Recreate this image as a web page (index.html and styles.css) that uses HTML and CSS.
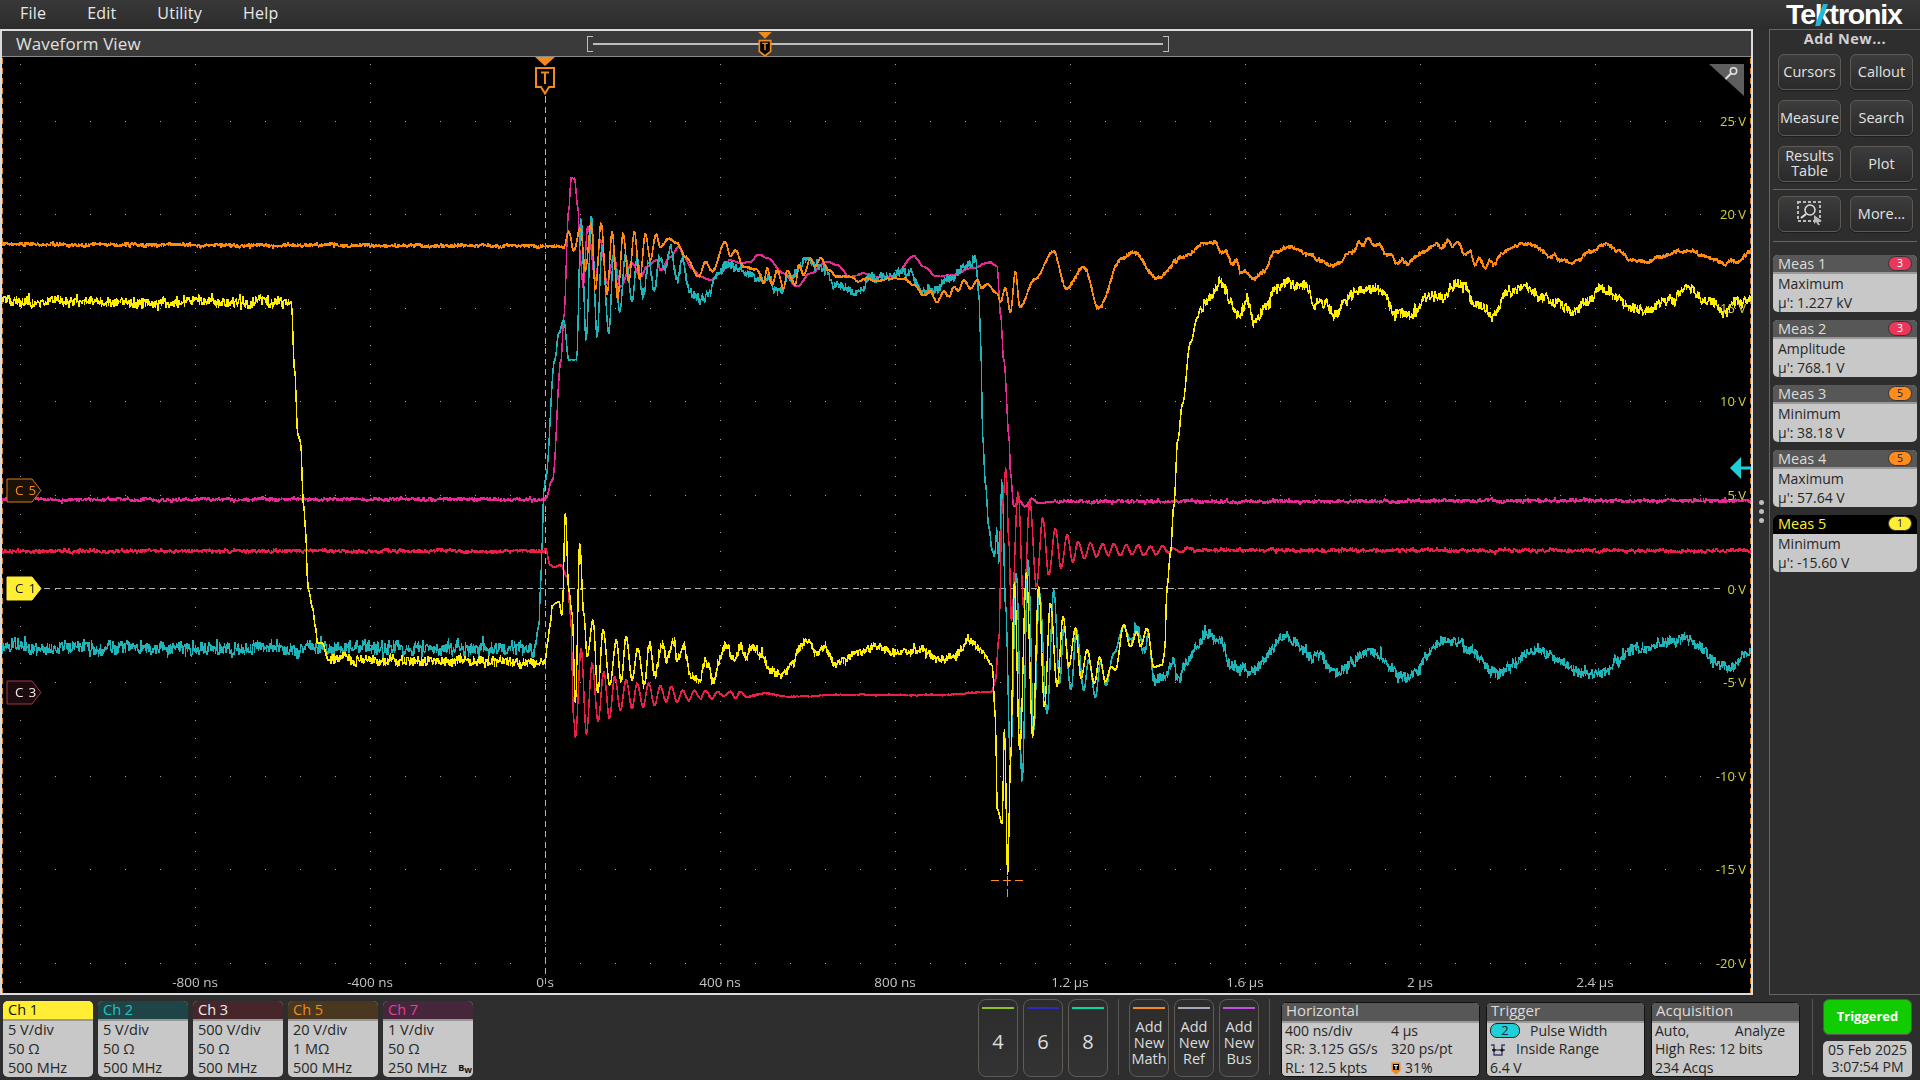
FILE: index.html
```html
<!DOCTYPE html>
<html lang="en">
<head>
<meta charset="utf-8">
<title>Waveform View</title>
<link rel="stylesheet" href="styles.css">
</head>
<body>
<div class="app">
  <header class="menubar">
    <nav class="menu">
      <span class="menu-file">File</span>
      <span class="menu-edit">Edit</span>
      <span class="menu-utility">Utility</span>
      <span class="menu-help">Help</span>
    </nav>
    <div class="logo">Tektronix<svg class="logo-slash" viewBox="0 0 13 22"><polygon points="8,0 13,0 5,22 0,22"/></svg></div>
  </header>

  <main class="main">
    <section class="view">
      <div class="view-title">
        <span class="view-name">Waveform View</span>
        <div class="overview">
          <span class="ov-bracket ov-left"></span>
          <span class="ov-line"></span>
          <span class="ov-bracket ov-right"></span>
          <svg class="ov-marker" viewBox="0 0 14 22"><polygon points="1,0 13,0 7,6" fill="#f28a1e"/><path d="M2 7.5H12V17L7 21L2 17Z" fill="#000" stroke="#f28a1e" stroke-width="1.5"/><path d="M4.5 10H9.5M7 10V16" stroke="#f28a1e" stroke-width="1.3" fill="none"/></svg>
        </div>
      </div>
      <div class="plot" id="plot">
        <canvas id="scope" class="scope" width="1749" height="936"></canvas>
        <svg class="trig-marker" viewBox="0 0 22 38"><polygon points="1,0 21,0 11,9" fill="#f28a1e"/><path d="M2 11H20V30H15L11 36.5L7 30H2Z" fill="#000" stroke="#f28a1e" stroke-width="2"/><path d="M7 15.5H15M11 15.5V27" stroke="#f28a1e" stroke-width="2" fill="none"/></svg>
        <svg class="corner" viewBox="0 0 35 32"><polygon points="0,0 35,0 35,32" fill="#5e5e5e"/><circle cx="24.5" cy="7" r="3.2" fill="none" stroke="#e0e0e0" stroke-width="1.6"/><path d="M22 9.5L16.5 15" stroke="#e0e0e0" stroke-width="2"/></svg>
        <svg class="level-arrow" viewBox="0 0 23 22"><polygon points="0,11 11,0 11,22" fill="#1fd0d8"/><rect x="11" y="9.5" width="12" height="3" fill="#1fd0d8"/></svg>
        <div class="tag tag-c5"><svg viewBox="0 0 36 25"><polygon points="1,1 26,1 35,12.5 26,24 1,24" /></svg><span>C 5</span></div>
        <div class="tag tag-c1"><svg viewBox="0 0 36 25"><polygon points="1,1 26,1 35,12.5 26,24 1,24" /></svg><span>C 1</span></div>
        <div class="tag tag-c3"><svg viewBox="0 0 36 25"><polygon points="1,1 26,1 35,12.5 26,24 1,24" /></svg><span>C 3</span></div>
      </div>
    </section>

    <div class="gutter"><i></i><i></i><i></i></div>

    <aside class="panel">
      <div class="logo-spacer">Add New...</div>
      <div class="btn-grid">
        <button class="btn">Cursors</button>
        <button class="btn">Callout</button>
        <button class="btn">Measure</button>
        <button class="btn">Search</button>
        <button class="btn btn-two">Results<br>Table</button>
        <button class="btn">Plot</button>
      </div>
      <hr class="rule">
      <div class="btn-grid">
        <button class="btn" aria-label="Search Region">
          <svg class="zoom-ico" viewBox="0 0 26 24"><rect x="1" y="1" width="22" height="19" fill="none" stroke="#bbb" stroke-width="2" stroke-dasharray="3 2"/><circle cx="13" cy="9" r="5" fill="none" stroke="#ddd" stroke-width="1.5"/><path d="M9 13L4 17" stroke="#ddd" stroke-width="2.2"/><polygon points="17,14 25,20 21,20.5 23,24 21,24 19,21 17,23" fill="#bbb"/></svg>
        </button>
        <button class="btn">More...</button>
      </div>
      <hr class="rule rule-2">
      <div class="meas-list">
        <div class="meas"><div class="meas-head"><span>Meas 1</span><b class="pill pill-red">3</b></div><div class="meas-body">Maximum<br>µ': 1.227 kV</div></div>
        <div class="meas"><div class="meas-head"><span>Meas 2</span><b class="pill pill-red">3</b></div><div class="meas-body">Amplitude<br>µ': 768.1 V</div></div>
        <div class="meas"><div class="meas-head"><span>Meas 3</span><b class="pill pill-orange">5</b></div><div class="meas-body">Minimum<br>µ': 38.18 V</div></div>
        <div class="meas"><div class="meas-head"><span>Meas 4</span><b class="pill pill-orange">5</b></div><div class="meas-body">Maximum<br>µ': 57.64 V</div></div>
        <div class="meas meas-active"><div class="meas-head"><span>Meas 5</span><b class="pill pill-yellow">1</b></div><div class="meas-body">Minimum<br>µ': -15.60 V</div></div>
      </div>
    </aside>
  </main>

  <footer class="bottom">
    <div class="channels">
      <div class="ch ch1"><div class="ch-head">Ch 1</div><div class="ch-body">5 V/div<br>50 Ω<br>500 MHz</div></div>
      <div class="ch ch2"><div class="ch-head">Ch 2</div><div class="ch-body">5 V/div<br>50 Ω<br>500 MHz</div></div>
      <div class="ch ch3"><div class="ch-head">Ch 3</div><div class="ch-body">500 V/div<br>50 Ω<br>500 MHz</div></div>
      <div class="ch ch5"><div class="ch-head">Ch 5</div><div class="ch-body">20 V/div<br>1 MΩ<br>500 MHz</div></div>
      <div class="ch ch7"><div class="ch-head">Ch 7</div><div class="ch-body">1 V/div<br>50 Ω<br>250 MHz<span class="bw">B<sub>w</sub></span></div></div>
    </div>
    <div class="tiles tiles-num">
      <button class="tile num"><i class="bar bar-4"></i>4</button>
      <button class="tile num"><i class="bar bar-6"></i>6</button>
      <button class="tile num"><i class="bar bar-8"></i>8</button>
    </div>
    <span class="vline vline-a"></span>
    <div class="tiles">
      <button class="tile add"><i class="bar bar-math"></i>Add<br>New<br>Math</button>
      <button class="tile add"><i class="bar bar-ref"></i>Add<br>New<br>Ref</button>
      <button class="tile add"><i class="bar bar-bus"></i>Add<br>New<br>Bus</button>
    </div>
    <span class="vline vline-b"></span>
    <div class="info info-h">
      <div class="info-head">Horizontal</div>
      <div class="info-body grid-h">
        <span>400 ns/div</span><span>4 µs</span>
        <span>SR: 3.125 GS/s</span><span>320 ps/pt</span>
        <span>RL: 12.5 kpts</span><span class="pct"><svg class="t-ico" viewBox="0 0 10 13"><path d="M.5.5H9.5V9L5 12.5L.5 9Z" fill="#f28a1e"/><rect x="2" y="2" width="6" height="6" fill="#000"/><path d="M3 3.5H7M5 3.5V7.5" stroke="#fff" stroke-width="1.2"/></svg>31%</span>
      </div>
    </div>
    <div class="info info-t">
      <div class="info-head">Trigger</div>
      <div class="info-body">
        <div class="t-row"><b class="src">2</b><span class="t-pw">Pulse Width</span></div>
        <div class="t-row"><svg class="range-ico" viewBox="0 0 16 14"><path d="M1 2H4V12H12V2H15" fill="none" stroke="#3a3a78" stroke-width="1.4"/><path d="M2 7H15" stroke="#111" stroke-width="1"/><circle cx="4" cy="7" r="1.6" fill="#111"/><circle cx="12" cy="7" r="1.6" fill="#111"/></svg><span class="t-ir">Inside Range</span></div>
        <div class="t-row">6.4 V</div>
      </div>
    </div>
    <div class="info info-a">
      <div class="info-head">Acquisition</div>
      <div class="info-body">
        <div class="a-row"><span>Auto,</span><span>Analyze</span></div>
        <div>High Res: 12 bits</div>
        <div>234 Acqs</div>
      </div>
    </div>
    <span class="vline vline-c"></span>
    <div class="status">
      <div class="triggered">Triggered</div>
      <div class="clock">05 Feb 2025<br>3:07:54 PM</div>
    </div>
  </footer>
</div>
<script src="scope.js"></script>
</body>
</html>
```

FILE: styles.css
```css
* { box-sizing: border-box; }
html, body { margin: 0; padding: 0; background: #2e2e2e; }
body { font-family: "Open Sans", "Liberation Sans", sans-serif; color: #ddd; overflow: hidden; }
.app { width: 1920px; height: 1080px; display: flex; flex-direction: column; }

/* menu */
.menubar { height: 29px; flex: none; display: flex; justify-content: space-between; background: linear-gradient(#383838, #2c2c2c); }
.menu { display: flex; font-size: 16px; line-height: 27px; color: #e8e8e8; letter-spacing: .2px; }
.menu-file { margin-left: 20px; }
.menu-edit { margin-left: 41px; }
.menu-utility { margin-left: 41px; }
.menu-help { margin-left: 41px; }
.logo { position: relative; width: 134px; font: bold 28.5px/28px "Liberation Sans", sans-serif; letter-spacing: -1.15px; color: #fff; }
.logo-slash { position: absolute; left: 29px; top: 4px; width: 13px; height: 22px; fill: #1fb8d8; }

/* main */
.main { height: 966px; flex: none; display: flex; }
.view { width: 1753px; flex: none; display: flex; flex-direction: column; border: 2px solid #dcdcdc; border-top-width: 2px; background: #000; }
.view-title { height: 26px; flex: none; display: flex; position: relative; background: #3a3a3a; border-bottom: 1px solid #8a8a8a; }
.view-name { margin-left: 14px; font-size: 17px; line-height: 25px; color: #e0e0e0; letter-spacing: .1px; }
.overview { position: absolute; left: 585px; top: 5px; width: 582px; height: 16px; display: flex; align-items: center; }
.ov-line { flex: 1; height: 2px; background: #bdbdbd; }
.ov-bracket { width: 6px; height: 16px; border: 1px solid #bdbdbd; }
.ov-left { border-right: 0; }
.ov-right { border-left: 0; }
.ov-marker { position: absolute; left: 170px; top: -4px; width: 16px; height: 25px; }
.plot { position: relative; flex: 1; min-height: 0; background: #000; overflow: hidden; }
.scope { position: absolute; left: 0; top: 0; display: block; }

.axis { position: absolute; font-size: 13px; line-height: 14px; white-space: nowrap; }
.axis-y { color: #d0d040; transform: translate(-100%, -50%); }
.axis-x { color: #c4c4c4; font-size: 13.5px; transform: translate(-50%, -50%); }

.trig-marker { position: absolute; left: 532px; top: 0; width: 22px; height: 38px; }
.corner { position: absolute; left: 1707px; top: 7px; width: 35px; height: 32px; }
.level-arrow { position: absolute; left: 1728px; top: 400px; width: 23px; height: 22px; }

.tag { position: absolute; left: 4px; width: 36px; height: 25px; }
.tag svg { position: absolute; inset: 0; width: 36px; height: 25px; }
.tag span { position: absolute; left: 9px; top: 0; font-size: 13.5px; line-height: 25px; white-space: nowrap; letter-spacing: .8px; }
.tag-c5 { top: 421px; }
.tag-c5 polygon { fill: #1d1207; stroke: #d9791d; }
.tag-c5 span { color: #f28a1e; }
.tag-c1 { top: 519px; }
.tag-c1 polygon { fill: #ffee33; stroke: #ffee33; }
.tag-c1 span { color: #1a1a1a; }
.tag-c3 { top: 623px; }
.tag-c3 polygon { fill: #1c0a0e; stroke: #a83246; }
.tag-c3 span { color: #eee; }

/* gutter */
.gutter { width: 16px; flex: none; display: flex; flex-direction: column; align-items: center; justify-content: flex-start; gap: 4px; padding-top: 471px; }
.gutter i { width: 5px; height: 5px; border-radius: 50%; background: #bdbdbd; }

/* right panel */
.panel { width: 151px; flex: none; border-left: 1px solid #666; border-top: 1px solid #666; border-bottom: 1px solid #666; display: flex; flex-direction: column; background: #2e2e2e; }
.logo-spacer { height: 24px; flex: none; text-align: center; font-size: 14.5px; font-weight: 700; line-height: 18px; color: #d0d0d0; letter-spacing: .5px; }
.btn-grid { display: grid; grid-template-columns: 63px 63px; column-gap: 9px; row-gap: 10px; grid-auto-rows: 36px; padding-left: 8px; }
.btn { margin: 0; padding: 0 0 2px; border: 1px solid #5f5a54; border-radius: 6px; background: linear-gradient(#3c3c3c, #2a2a2a); color: #e2e2e2; font: 14.5px/15px "Open Sans", "Liberation Sans", sans-serif; display: flex; align-items: center; justify-content: center; text-align: center; box-shadow: 0 1px 1px #1c1c1c; }
.btn-two { line-height: 15.5px; }
.zoom-ico { width: 26px; height: 24px; }
.rule { width: 144px; margin: 7px 0 6px 3px; height: 1px; border: 0; background: #666; flex: none; }
.rule-2 { margin: 9px 0 13px 3px; }
.meas-list { display: flex; flex-direction: column; gap: 8px; padding-left: 3px; }
.meas { width: 144px; height: 57px; border-radius: 5px; overflow: hidden; background: #c8c8c8; }
.meas-head { height: 19px; display: flex; align-items: center; justify-content: space-between; padding: 0 5px 0 5px; background: #575757; color: #dcdcdc; font-size: 14.5px; border-bottom: 2px solid #999; }
.meas-body { padding-left: 5px; color: #262626; font-size: 14px; line-height: 19px; }
.meas-active .meas-head { background: #000; color: #ffee33; border-bottom-color: #000; }
.pill { width: 24px; height: 15px; border-radius: 8px; font: 400 10.5px/12px "Open Sans", sans-serif; text-align: center; border: 1px solid #333; }
.pill-red { background: #e8395c; color: #fff; }
.pill-orange { background: #ff8c1e; color: #222; }
.pill-yellow { background: #ffee33; color: #222; }

/* bottom */
.bottom { height: 85px; flex: none; display: flex; align-items: flex-start; background: #2e2e2e; }
.channels { display: flex; gap: 5px; margin: 6px 0 0 3px; }
.ch { width: 90px; height: 76px; border-radius: 5px; overflow: hidden; background: #c8c8c8; }
.ch-head { height: 20px; padding-left: 5px; font-size: 14.5px; line-height: 18px; border-bottom: 2px solid #999; }
.ch-body { position: relative; padding-left: 5px; color: #262626; font-size: 14.5px; line-height: 19px; margin-top: -1px; }
.ch1 .ch-head { background: #ffee33; color: #111; }
.ch2 .ch-head { background: #1f4445; color: #1fc4c8; }
.ch3 .ch-head { background: #46262b; color: #eee; }
.ch5 .ch-head { background: #49371f; color: #f28a1e; }
.ch7 .ch-head { background: #46263a; color: #e0409a; }
.bw { position: absolute; right: 1px; bottom: 5px; font-size: 9px; font-weight: 700; line-height: 9px; color: #111; }
.bw sub { font-size: 9px; vertical-align: -2px; line-height: 0; }
.tiles { display: flex; gap: 5px; margin-top: 4px; }
.tiles-num { margin-left: 505px; }
.tile { position: relative; width: 40px; height: 78px; margin: 0; padding: 0; border: 1px solid #5f5a54; border-radius: 8px; background: linear-gradient(#2c2c2c, #333); color: #ddd; font-family: "Open Sans", "Liberation Sans", sans-serif; text-align: center; }
.num { font-size: 20px; padding-top: 7px; }
.add { font-size: 14.5px; line-height: 16px; padding-top: 9px; }
.bar { position: absolute; left: 3px; right: 3px; top: 7px; height: 2px; }
.bar-4 { background: #8fc21f; }
.bar-6 { background: #2a2abf; }
.bar-8 { background: #00d8a0; }
.bar-math { background: #f28a1e; }
.bar-ref { background: #a8a8b8; }
.bar-bus { background: #c050e0; }
.vline { width: 1px; height: 76px; background: #555; flex: none; margin-top: 4px; }
.vline-a { margin-left: 10px; margin-right: 10px; }
.vline-b { margin-left: 10px; margin-right: 11px; }
.vline-c { margin-left: 12px; margin-right: 10px; }
.info { height: 75px; margin-top: 7px; border: 1px solid #111; border-radius: 5px; overflow: hidden; background: #c8c8c8; margin-right: 6px; }
.info-h { width: 199px; }
.info-t { width: 159px; margin-right: 6px; }
.info-a { width: 149px; margin-right: 0; }
.info-head { height: 20px; padding-left: 4px; background: #575757; color: #dcdcdc; font-size: 15px; line-height: 15px; border-bottom: 2px solid #999; }
.info-body { padding-left: 3px; color: #262626; font-size: 14px; line-height: 18.7px; margin-top: -1.5px; }
.grid-h { display: grid; grid-template-columns: 106px auto; }
.pct { display: flex; align-items: center; }
.t-ico { width: 10px; height: 13px; margin-right: 4px; }
.t-row { display: flex; align-items: center; height: 18.7px; }
.src { width: 30px; height: 15px; border: 1px solid #222; border-radius: 7px; background: #1fd0d8; font: 400 13px/13px "Open Sans", sans-serif; text-align: center; }
.t-pw { margin-left: 10px; }
.t-ir { margin-left: 10px; }
.range-ico { width: 16px; height: 14px; }
.a-row { display: flex; justify-content: space-between; padding-right: 14px; }
.status { width: 89px; margin-top: 4px; display: flex; flex-direction: column; gap: 6px; }
.triggered { height: 36px; border: 1px solid #555; border-radius: 6px; background: #10cc00; color: #fff; font-size: 13px; font-weight: 700; line-height: 33px; text-align: center; }
.clock { height: 36px; border-radius: 5px; background: #c8c8c8; color: #262626; font-size: 14px; line-height: 17px; text-align: center; }
```

FILE: scope.js
```js
(function () {
  var OX = 2, OY = 57;
  var cv = document.getElementById('scope');
  var plot = document.getElementById('plot');
  var g = cv.getContext('2d');
  g.translate(-OX, -OY);

  var T0 = 545, DX = 175, Y0 = 588.5, DY = 93.6;

  function rng(seed) {
    return function () {
      seed |= 0; seed = seed + 0x6D2B79F5 | 0;
      var t = Math.imul(seed ^ seed >>> 15, 1 | seed);
      t = t + Math.imul(t ^ t >>> 7, 61 | t) ^ t;
      return ((t ^ t >>> 14) >>> 0) / 4294967296;
    };
  }

  /* graticule */
  g.fillStyle = '#a8a8a8';
  var i, k;
  for (i = -3; i <= 7; i++) {
    for (k = -60; k <= 60; k++) {
      var dy = Y0 + k * DY / 5;
      if (dy > 58 && dy < 992 && T0 + i * DX > 3 && T0 + i * DX < 1750) g.fillRect(Math.round(T0 + i * DX), Math.round(dy), 1, 1);
    }
  }
  for (i = -5; i <= 4; i++) {
    for (k = -20; k <= 40; k++) {
      var dx = T0 + k * DX / 5;
      if (dx > 3 && dx < 1750) g.fillRect(Math.round(dx), Math.round(Y0 + i * DY), 1, 1);
    }
  }

  /* dashed markers and edges */
  g.fillStyle = '#b4b4b4';
  for (var x = 44; x < 1722; x += 10.5) g.fillRect(Math.round(x), 588, 6, 1);
  for (var y = 96; y < 980; y += 10.5) g.fillRect(545, Math.round(y), 1, 6);
  g.fillStyle = '#d9842a';
  for (y = 58; y < 992; y += 10) {
    g.fillRect(2, y, 1, 6);
    g.fillRect(1750, y, 1, 6);
  }

  /* helpers to map zoomed reading coordinates to the page */
  function map(list, ox, oy, sx, sy) {
    var r = [];
    for (var i = 0; i < list.length; i += 2) r.push([ox + list[i] / sx, oy + list[i + 1] / sy]);
    return r;
  }
  var Z8 = function (l) { return map(l, 500, 160, 3, 3); };
  var Z9 = function (l) { return map(l, 520, 480, 3, 3); };
  var Z10 = function (l) { return map(l, 940, 440, 3, 3); };
  var Z12 = function (l) { return map(l, 1200, 220, 2.8, 3); };
  var S = function (l) { return map(l, 0, 0, 1 / 1.2245, 1 / 1.2245); };

  function at(pts, x, st) {
    while (st.i < pts.length - 2 && pts[st.i + 1][0] <= x) st.i++;
    var a = pts[st.i], b = pts[st.i + 1];
    var d = b[0] - a[0];
    if (d <= 0) return b[1];
    var t = Math.min(1, Math.max(0, (x - a[0]) / d));
    return a[1] + (b[1] - a[1]) * (1 - Math.cos(t * Math.PI)) / 2;
  }

  function trace(color, pts, noiseFn, seed, thick) {
    var r = rng(seed), st = { i: 0 };
    var x0 = Math.round(pts[0][0]), x1 = Math.round(pts[pts.length - 1][0]);
    var prev = null, slow = 0;
    g.fillStyle = color;
    for (var x = x0; x <= x1; x++) {
      var lo = Infinity, hi = -Infinity;
      for (var s = 0; s < 4; s++) {
        var v = at(pts, x + s / 4, st);
        if (v < lo) lo = v;
        if (v > hi) hi = v;
      }
      var n = noiseFn(x);
      slow = 0.7 * slow + 0.3 * (r() - 0.5) * 3.5 * n;
      var a = (r() - 0.5) * 2 * n, b = (r() - 0.5) * 2 * n;
      if (r() < 0.06) a *= 2;
      var top = lo + slow + Math.min(a, b);
      var bot = hi + slow + Math.max(a, b);
      if (prev !== null) { top = Math.min(top, prev); bot = Math.max(bot, prev); }
      var t = Math.round(top - thick / 2), h = Math.max(1, Math.round(bot + thick / 2) - t);
      g.fillRect(x, t, 1, h);
      prev = (lo + hi) / 2 + slow + a;
    }
  }

  /* magenta, Ch 7 */
  var magenta = [[0, 499.5], [545, 499.5]].concat(
    [[552, 480]],
    Z8([182, 600, 190, 470, 205, 150, 212, 55, 222, 55, 232, 140, 240, 300, 248, 380, 262, 200, 285, 360, 300, 240, 320, 370, 340, 290, 360, 380, 395, 310, 420, 350, 440, 320, 470, 300, 480, 330, 510, 290, 535, 260, 550, 290, 575, 325, 600, 350, 630, 360, 660, 340, 690, 300, 720, 310, 750, 305, 775, 283, 800, 295, 850, 340, 890, 380, 930, 340, 980, 305, 1010, 315, 1050, 350, 1090, 340, 1130, 350, 1180, 350, 1240, 288, 1270, 320, 1310, 350, 1360, 345, 1410, 325, 1470, 308, 1490, 320, 1500, 460, 1510, 600]),
    Z10([207, 0, 210, 100, 220, 200, 235, 180, 255, 200, 275, 175, 295, 190, 340, 185]),
    [[1750, 500.5]]
  );
  trace('#e52a96', magenta, function (x) { return x < 546 || x > 1053 ? 1.3 : 0.3; }, 7, 1.6);

  /* cyan, Ch 2 */
  var cyan = [[0, 648], [528, 648]].concat(
    Z9([40, 520, 55, 440, 60, 330, 65, 190, 70, 30, 75, 0]),
    Z8([163, 600, 175, 520, 190, 480, 205, 600, 228, 600, 242, 175, 257, 540, 273, 170, 290, 530, 305, 255, 325, 520, 340, 280, 358, 455, 375, 285, 395, 425, 410, 295, 428, 410, 445, 300, 460, 380, 480, 285, 495, 330, 512, 260, 530, 360, 545, 300, 565, 390, 597, 415, 625, 400, 650, 345, 680, 310, 720, 335, 760, 345, 800, 360, 835, 395, 870, 350, 920, 305, 960, 320, 1010, 375, 1050, 395, 1085, 395, 1110, 355, 1165, 345, 1230, 340, 1260, 385, 1300, 395, 1350, 355, 1400, 320, 1425, 295, 1435, 400, 1440, 520, 1442, 600]),
    Z10([127, 0, 135, 130, 145, 260, 155, 330, 162, 350, 170, 265, 175, 370, 185, 120, 195, 490, 210, 960, 228, 400, 245, 1025, 263, 360, 280, 870, 297, 460, 320, 820, 340, 450, 358, 730, 370, 560, 392, 750, 408, 570, 430, 750, 445, 660, 465, 770, 480, 670, 497, 735, 520, 640, 550, 560, 570, 600, 590, 570, 610, 630, 625, 590, 640, 710, 680, 710, 695, 660, 715, 715, 740, 660, 770, 610, 795, 580, 840, 600]),
    S([1005, 545, 1020, 548, 1050, 520, 1075, 537, 1090, 550, 1120, 530, 1145, 552, 1185, 523, 1225, 548, 1255, 532, 1300, 550, 1340, 530, 1375, 522, 1410, 545, 1430, 532])
  );
  trace('#1fb4b8', cyan, function (x) {
    if (x < 535) return 5.5;
    if (x < 640) return 0.3;
    if (x < 975) return 3.6;
    return x < 1130 ? 0.4 : 4.5;
  }, 21, 1.4);

  /* red, Ch 3 */
  var red = [[0, 551], [545, 551]].concat(
    Z9([75, 210, 90, 255, 100, 262, 120, 255, 140, 290, 150, 400, 160, 720, 165, 770, 182, 505, 198, 760, 215, 550, 233, 725, 250, 575, 267, 715, 283, 590, 300, 690, 317, 600, 335, 685, 350, 610, 368, 680, 385, 610, 402, 675, 420, 620, 437, 665, 453, 620, 470, 665, 487, 630, 505, 660, 522, 632, 540, 655, 555, 632, 575, 655, 590, 635, 610, 648, 630, 635, 645, 655, 660, 635, 680, 650, 730, 640, 800, 650, 960, 645]),
    Z10([0, 765, 155, 755, 165, 720, 175, 600, 185, 200, 197, 85, 205, 300, 213, 540, 233, 155, 250, 500, 268, 185, 288, 440, 307, 235, 325, 405, 345, 265, 362, 385, 380, 285, 397, 365, 413, 305, 432, 355, 450, 310, 468, 350, 487, 312, 503, 345, 520, 310, 540, 345, 558, 315, 575, 342, 593, 315, 610, 345, 630, 318, 648, 345, 665, 318, 685, 338, 700, 325, 720, 335, 740, 322, 770, 330, 840, 330]),
    [[1750, 551]]
  );
  trace('#ea2048', red, function (x) { return x < 546 || x > 1180 ? 1.4 : 0.5; }, 33, 1.6);

  /* yellow, Ch 1 */
  var yellow = [[0, 302], [291, 302]].concat(
    [[294, 367], [297.5, 435], [300, 441], [303, 503], [305, 527], [307, 577], [308, 590], [312, 607], [315, 627], [317, 643], [322, 643], [328, 660], [545, 661]],
    Z9([80, 490, 90, 430, 95, 375, 115, 365, 125, 405, 135, 100, 145, 330, 155, 400, 165, 665, 178, 190, 190, 400, 200, 530, 218, 420, 232, 640, 248, 450, 268, 615, 288, 480, 302, 605, 317, 470, 335, 600, 352, 505, 372, 620, 388, 490, 403, 585, 425, 485, 440, 540, 458, 480, 470, 540, 492, 500, 510, 590, 540, 600, 555, 540, 580, 595, 600, 530, 620, 490, 640, 535, 660, 500, 680, 530, 690, 505, 730, 530, 745, 570, 785, 580, 820, 550, 835, 510, 865, 480, 890, 520, 910, 495, 945, 550, 960, 545]),
    S([700, 533, 715, 528, 735, 533, 750, 530]),
    Z10([0, 665, 30, 650, 90, 605, 130, 640, 155, 675, 165, 830, 170, 1105, 185, 1150, 192, 870, 202, 1305, 210, 970, 222, 430, 238, 930, 258, 400, 277, 890, 295, 440, 312, 800, 330, 490, 350, 740, 368, 530, 385, 680, 405, 565, 422, 715, 440, 630, 462, 730, 478, 650, 495, 725, 512, 680, 525, 690, 550, 555, 570, 620, 590, 575, 600, 620, 620, 565, 640, 680, 665, 675, 672, 640, 680, 440, 690, 340, 700, 200, 712, 0]),
    [[1182, 404], [1190, 343], [1197, 318]],
    Z12([0, 265, 30, 230, 60, 190, 80, 235, 110, 285, 135, 245, 150, 300, 185, 265, 205, 210, 240, 190, 300, 195, 315, 250, 345, 245, 380, 285, 400, 250, 440, 210, 490, 205, 520, 225, 545, 280, 585, 290, 605, 270, 640, 225, 685, 235, 710, 190, 735, 200, 770, 250, 820, 285, 860, 225, 910, 200, 960, 235, 1000, 250, 1045, 275, 1085, 235, 1130, 205, 1170, 230, 1190, 255, 1250, 270, 1310, 245, 1365, 205, 1410, 235, 1470, 275, 1500, 250, 1540, 235])
  );
  trace('#ffee00', yellow, function (x) {
    if (x < 291) return 4;
    if (x < 330) return 0.3;
    if (x < 546) return 4;
    if (x < 640) return 0.4;
    if (x < 985) return 3.4;
    if (x < 1200) return 0.3;
    return 4;
  }, 55, 1.4);

  /* orange, Ch 5 */
  var orange = [[0, 244.5], [560, 246]].concat(
    Z8([190, 263, 205, 215, 220, 272, 240, 205, 255, 330, 272, 190, 285, 390, 302, 190, 320, 405, 335, 215, 352, 415, 368, 220, 385, 365, 402, 215, 418, 360, 435, 222, 450, 300, 467, 225, 480, 260, 505, 235, 530, 250, 555, 290, 595, 350, 615, 305, 635, 335, 675, 245, 690, 290, 705, 270, 730, 320, 770, 330, 790, 370, 800, 325, 815, 375, 830, 330, 850, 385, 860, 330, 885, 375, 895, 315, 910, 345, 930, 295, 945, 320, 960, 295, 985, 330, 1010, 350, 1050, 350, 1075, 365, 1100, 355, 1130, 365, 1170, 355, 1210, 355, 1240, 375, 1270, 405, 1290, 395, 1310, 425, 1330, 395, 1345, 410, 1360, 380, 1375, 390, 1390, 360, 1410, 385, 1430, 360, 1445, 385, 1460, 372, 1490, 400, 1500, 425, 1515, 385, 1530, 455, 1545, 335, 1558, 440]),
    S([845, 228, 860, 205, 870, 235, 885, 218, 897, 252, 915, 212, 925, 205, 945, 227, 965, 210, 985, 199]),
    Z12([40, 65, 60, 100, 70, 90, 90, 135, 100, 120, 115, 160, 125, 155, 150, 178, 175, 155, 210, 95, 240, 80, 265, 85, 300, 100, 340, 125, 365, 138, 395, 125, 410, 100, 430, 95, 445, 65, 455, 78, 470, 55, 485, 80, 500, 72, 520, 105, 535, 100, 550, 132, 565, 118, 580, 135, 600, 112, 625, 95, 660, 72, 675, 85, 695, 62, 705, 78, 720, 65, 740, 105, 755, 92, 770, 132, 780, 112, 797, 145, 810, 122, 822, 135, 840, 105, 870, 85, 900, 72, 925, 72, 960, 90, 975, 112, 990, 105, 1005, 125, 1020, 118, 1035, 130, 1060, 118, 1090, 95, 1135, 72, 1165, 90, 1210, 122, 1250, 130, 1290, 110, 1340, 95, 1375, 92, 1410, 108, 1445, 122, 1470, 135, 1490, 120, 1500, 128, 1540, 95])
  );
  trace('#ff8a10', orange, function (x) { return x < 560 ? 1.3 : (x < 1050 ? 0.6 : 1.3); }, 77, 1.7);

  /* crosshair at the measured minimum */
  g.fillStyle = '#ff9020';
  g.fillRect(991, 880, 8, 1);
  g.fillRect(1003, 880, 8, 1);
  g.fillRect(1015, 880, 8, 1);
  g.fillRect(1007, 876, 1, 10);
  g.fillRect(1007, 889, 1, 8);

  /* axis labels as real text */
  function label(text, cls, x, y) {
    var el = document.createElement('span');
    el.className = 'axis ' + cls;
    el.textContent = text;
    el.style.left = (x - OX) + 'px';
    el.style.top = (y - OY) + 'px';
    plot.appendChild(el);
  }
  ['25 V', '20 V', '15 V', '10 V', '5 V', '0 V', '-5 V', '-10 V', '-15 V', '-20 V'].forEach(function (t, n) {
    label(t, 'axis-y', 1746, 120.5 + n * DY);
  });
  ['-800 ns', '-400 ns', '0 s', '400 ns', '800 ns', '1.2 µs', '1.6 µs', '2 µs', '2.4 µs'].forEach(function (t, n) {
    label(t, 'axis-x', 195 + n * DX, 982);
  });
})();
```
